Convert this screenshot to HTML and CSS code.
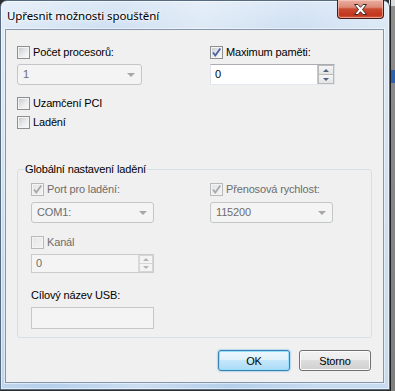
FILE: index.html
```html
<!DOCTYPE html>
<html lang="cs">
<head>
<meta charset="utf-8">
<link rel="stylesheet" href="styles.css">
</head>
<body>
<div class="screen">
  <div class="window">
    <div class="titlebar">
      <span class="title">Upřesnit možnosti spouštění</span>
      <button class="close" aria-label="Zavřít">
        <svg width="15" height="11" viewBox="0 0 15 11"><path d="M1.5 0.5 H5 L7.5 3.3 L10 0.5 H13.5 L9.5 5.5 L13.5 10.5 H10 L7.5 7.7 L5 10.5 H1.5 L5.5 5.5 Z" fill="#fff" stroke="#3b2a2a" stroke-width="1" stroke-linejoin="round"/></svg>
      </button>
    </div>
    <div class="client">
      <div class="top-grid">
        <div class="col">
          <label class="chk"><span class="box"></span><span>Počet procesorů:</span></label>
          <div class="combo dis"><span class="cval">1</span><span class="arrow"></span></div>
          <label class="chk gap-lg"><span class="box"></span><span>Uzamčení PCI</span></label>
          <label class="chk gap-sm"><span class="box"></span><span>Ladění</span></label>
        </div>
        <div class="col">
          <label class="chk"><span class="box on"><svg width="11" height="11" viewBox="0 0 11 11"><path d="M2 5.5 L4.3 8.5 L9.3 1.5" fill="none" stroke="#4a63a0" stroke-width="1.8"/></svg></span><span>Maximum paměti:</span></label>
          <div class="spin"><span class="sval">0</span><span class="sbtns"><span class="sb"><i class="up"></i></span><span class="sb"><i class="dn"></i></span></span></div>
        </div>
      </div>
      <fieldset class="group">
        <legend>Globální nastavení ladění</legend>
        <div class="gcols">
          <div class="col">
            <label class="chk dis"><span class="box on"><svg width="11" height="11" viewBox="0 0 11 11"><path d="M2 5.5 L4.3 8.5 L9.3 1.5" fill="none" stroke="#a8a8a8" stroke-width="1.8"/></svg></span><span>Port pro ladění:</span></label>
            <div class="combo dis g"><span class="cval">COM1:</span><span class="arrow"></span></div>
            <label class="chk dis gap-kanal"><span class="box"></span><span>Kanál</span></label>
            <div class="spin dis"><span class="sval">0</span><span class="sbtns"><span class="sb"><i class="up"></i></span><span class="sb"><i class="dn"></i></span></span></div>
            <div class="lbl">Cílový název USB:</div>
            <div class="textbox dis"></div>
          </div>
          <div class="col">
            <label class="chk dis"><span class="box on"><svg width="11" height="11" viewBox="0 0 11 11"><path d="M2 5.5 L4.3 8.5 L9.3 1.5" fill="none" stroke="#a8a8a8" stroke-width="1.8"/></svg></span><span>Přenosová rychlost:</span></label>
            <div class="combo dis g"><span class="cval">115200</span><span class="arrow"></span></div>
          </div>
        </div>
      </fieldset>
      <div class="buttons">
        <button class="btn default">OK</button>
        <button class="btn">Storno</button>
      </div>
    </div>
  </div>
  <div class="behind"></div>
</div>
</body>
</html>
```

FILE: styles.css
```css
* { box-sizing: border-box; }
html, body { margin: 0; padding: 0; }
body {
  width: 395px;
  height: 391px;
  overflow: hidden;
  background: #2e2e2e;
  font-family: "Liberation Sans", Arial, sans-serif;
  font-size: 11px;
  letter-spacing: -0.15px;
  color: #000;
}
.screen {
  display: flex;
  width: 395px;
  height: 391px;
  align-items: flex-start;
  background: linear-gradient(90deg, #e9ecef 0, #e9ecef 100%) top right / 6px 6px no-repeat, #2e2e2e;
}
.window {
  width: 390px;
  height: 390px;
  flex: none;
  border: 1px solid #566a80;
  border-radius: 7px 7px 0 0;
  background:
    linear-gradient(100deg, rgba(255,255,255,0.35) 0, rgba(255,255,255,0) 25%, rgba(255,255,255,0.3) 45%, rgba(255,255,255,0) 65%, rgba(255,255,255,0.25) 85%),
    linear-gradient(180deg, #dbe8f6 0, #cfe0f2 28px, #bcd4ee 60%, #b5cfeb 100%);
  box-shadow: inset 0 0 0 1px rgba(255,255,255,0.55);
  padding: 0 5px 6px 4px;
  display: flex;
  flex-direction: column;
}
.titlebar {
  height: 28px;
  display: flex;
  justify-content: space-between;
  align-items: flex-start;
  flex: none;
}
.title {
  margin: 7px 0 0 2px;
  font-family: "Noto Sans", "Open Sans", sans-serif;
  font-size: 11.5px;
  letter-spacing: -0.1px;
  line-height: 16px;
  color: #000;
  text-shadow: 0 0 6px #fff, 0 0 3px #fff;
}
.close {
  width: 47px;
  height: 19px;
  margin: -1px 0 0 0;
  padding: 0;
  border: 1px solid #4a1b14;
  border-top: none;
  border-radius: 0 0 4px 4px;
  background: linear-gradient(180deg, #eab0a3 0, #dd8a76 40%, #c94a30 50%, #c2351c 85%, #d3654c 100%);
  box-shadow: inset 0 0 0 1px rgba(255,210,200,0.55);
  display: flex;
  align-items: center;
  justify-content: center;
}
.close svg { display: block; margin-top: 1px; }
.client {
  flex: 1;
  border: 1px solid #8396ac;
  background: #f0f0f0;
  box-shadow: 0 0 0 1px rgba(255,255,255,0.5);
  padding: 15px 11px 0 11px;
  display: flex;
  flex-direction: column;
}
.top-grid {
  display: grid;
  grid-template-columns: 193px 125px;
}
.col { display: flex; flex-direction: column; align-items: flex-start; }
.chk {
  display: flex;
  align-items: center;
  gap: 3px;
  height: 15px;
  line-height: 15px;
  white-space: nowrap;
}
.chk.dis { color: #6d6d6d; }
.gap-lg { margin-top: 11px; }
.gap-sm { margin-top: 4px; }
.box {
  width: 13px;
  height: 13px;
  flex: none;
  border: 1px solid #8e8f8f;
  padding: 1px;
  background: linear-gradient(135deg, #c9cdd3 0, #e9eaec 55%, #f8f8f8 100%) content-box, #f4f4f4;
  display: flex;
  align-items: center;
  justify-content: center;
  position: relative;
}
.box svg { position: absolute; left: 0; top: 0; }
.chk.dis .box {
  border-color: #b8b9ba;
  background: linear-gradient(135deg, #e4e6e8 0, #f2f2f2 100%) content-box, #f4f4f4;
}
.combo {
  margin-top: 4px;
  width: 125px;
  height: 21px;
  border: 1px solid #c3c6c9;
  border-radius: 3px;
  background: #f4f4f4;
  display: flex;
  align-items: center;
  justify-content: space-between;
  padding: 0 5px 0 5px;
  color: #6d6d6d;
}
.combo.g { width: 123px; height: 21px; margin-top: 5px; }
.cval { line-height: 15px; }
.arrow {
  width: 0;
  height: 0;
  border-left: 4px solid transparent;
  border-right: 4px solid transparent;
  border-top: 4px solid #a7a7a7;
  margin-right: 1px;
}
.spin {
  margin-top: 4px;
  width: 125px;
  height: 21px;
  border: 1px solid #abadb3;
  border-color: #abadb3 #dbdfe6 #e3e9ef #e2e3ea;
  background: #fff;
  display: flex;
  align-items: stretch;
  justify-content: space-between;
}
.sval { padding-left: 4px; line-height: 19px; }
.sbtns {
  width: 17px;
  display: flex;
  flex-direction: column;
  border-left: 1px solid #c8c8c8;
}
.sb {
  flex: 1;
  display: flex;
  align-items: center;
  justify-content: center;
  background: linear-gradient(180deg, #f6f6f6 0, #e4e4e4 100%);
  border: 1px solid #b9b9b9;
}
.sb + .sb { border-top: none; }
.sb i { width: 0; height: 0; border-left: 3px solid transparent; border-right: 3px solid transparent; }
.sb i.up { border-bottom: 3px solid #4e6283; }
.sb i.dn { border-top: 3px solid #4e6283; }
.spin.dis {
  width: 123px;
  height: 19px;
  border: 1px solid #c9cbce;
  background: #f4f4f4;
  color: #6d6d6d;
}
.spin.dis .sval { line-height: 17px; }
.spin.dis .sbtns { width: 15px; border-left: 1px solid #dadada; }
.spin.dis .sb { background: #f4f4f4; border-color: #d6d6d6; }
.spin.dis .sb i.up { border-bottom-color: #b4b4b4; }
.spin.dis .sb i.dn { border-top-color: #b4b4b4; }
.group {
  margin: 32px 0 0 0;
  padding: 0 13px 8px 13px;
  border: 1px solid #d5dfe5;
  border-radius: 3px;
  min-width: 0;
}
.group legend {
  padding: 0 1px;
  margin-left: -7px;
  line-height: 15px;
}
.gcols {
  display: grid;
  grid-template-columns: 179px 125px;
  padding-top: 5px;
}
.gap-kanal { margin-top: 12px; }
.lbl { margin-top: 15px; line-height: 15px; }
.textbox {
  margin-top: 4px;
  width: 123px;
  height: 22px;
  border: 1px solid #c5c7ca;
  background: #f4f4f4;
}
.buttons {
  margin-top: 12px;
  display: flex;
  justify-content: flex-end;
  gap: 9px;
  padding-right: 1px;
}
.btn {
  width: 72px;
  height: 21px;
  padding: 0;
  font: inherit;
  letter-spacing: inherit;
  color: #000;
  border: 1px solid #707070;
  border-radius: 3px;
  background: linear-gradient(180deg, #f2f2f2 0, #ebebeb 50%, #dddddd 50%, #cfcfcf 100%);
  box-shadow: inset 0 0 0 1px #fcfcfc;
}
.btn.default {
  border-color: #3c7fb1;
  background: linear-gradient(180deg, #ecf7fd 0, #ddf1fc 50%, #c3e7fc 50%, #abdbf6 100%);
  box-shadow: inset 0 0 0 1px #94e0fd, 0 0 1px 1px rgba(80,170,230,0.35);
}
.behind {
  flex: 1;
  height: 391px;
  border-left: 1px solid #1f1f1f;
  background:
    linear-gradient(180deg, transparent 0, transparent 70px, #2b61b1 70px, #2b61b1 83px, transparent 83px),
    linear-gradient(180deg, #d9dcdf 0, #d9dcdf 6px, #8d8d8d 6px, #7f7f7f 100%);
}
```
